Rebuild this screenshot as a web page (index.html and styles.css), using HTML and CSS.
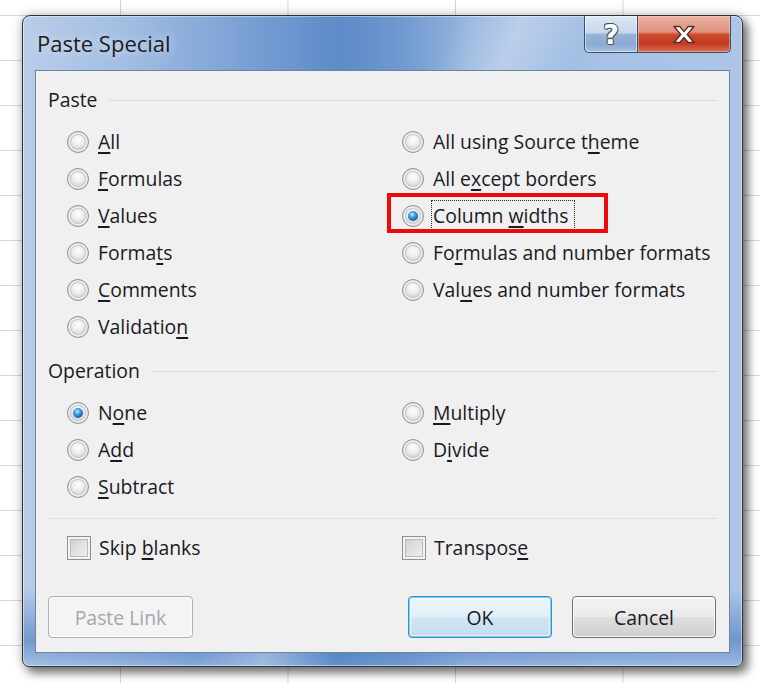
FILE: index.html
```html
<!DOCTYPE html>
<html lang="en">
<head>
<meta charset="utf-8">
<title>Paste Special</title>
<link rel="stylesheet" href="styles.css">
</head>
<body>
<div class="sheet">
  <div class="dialog">
    <div class="titlebar">
      <span class="title">Paste Special</span>
      <div class="caption-buttons">
        <span class="cap-help">?</span>
        <span class="cap-close">
          <svg width="24" height="19" viewBox="0 0 24 19">
            <path d="M2 1.5h5.8L12 6.6l4.2-5.1H22l-6.8 8 6.8 8h-5.8L12 12.4l-4.2 5.1H2l6.8-8z" fill="#fff" stroke="#5a2a22" stroke-width="1.3" stroke-linejoin="round"/>
          </svg>
        </span>
      </div>
    </div>

    <div class="client">
      <div class="group-head"><span>Paste</span><i class="rule"></i></div>
      <div class="options paste-options">
        <label class="option"><span class="radio"></span><span><u>A</u>ll</span></label>
        <label class="option"><span class="radio"></span><span><u>F</u>ormulas</span></label>
        <label class="option"><span class="radio"></span><span><u>V</u>alues</span></label>
        <label class="option"><span class="radio"></span><span>Forma<u>t</u>s</span></label>
        <label class="option"><span class="radio"></span><span><u>C</u>omments</span></label>
        <label class="option"><span class="radio"></span><span>Validatio<u>n</u></span></label>
        <label class="option"><span class="radio"></span><span>All using Source t<u>h</u>eme</span></label>
        <label class="option"><span class="radio"></span><span>All e<u>x</u>cept borders</span></label>
        <label class="option"><span class="callout"></span><span class="radio checked"></span><span class="focus">Column <u>w</u>idths</span></label>
        <label class="option"><span class="radio"></span><span>Fo<u>r</u>mulas and number formats</span></label>
        <label class="option"><span class="radio"></span><span>Val<u>u</u>es and number formats</span></label>
      </div>

      <div class="group-head op-head"><span>Operation</span><i class="rule"></i></div>
      <div class="options op-options">
        <label class="option"><span class="radio checked"></span><span>N<u>o</u>ne</span></label>
        <label class="option"><span class="radio"></span><span>A<u>d</u>d</span></label>
        <label class="option"><span class="radio"></span><span><u>S</u>ubtract</span></label>
        <label class="option"><span class="radio"></span><span><u>M</u>ultiply</span></label>
        <label class="option"><span class="radio"></span><span>D<u>i</u>vide</span></label>
      </div>

      <div class="separator"></div>

      <div class="checks">
        <label class="option check-option"><span class="checkbox"></span><span>Skip <u>b</u>lanks</span></label>
        <label class="option check-option"><span class="checkbox"></span><span>Transpos<u>e</u></span></label>
      </div>

      <div class="buttons">
        <span class="btn btn-disabled">Paste Link</span>
        <span class="btn btn-default">OK</span>
        <span class="btn">Cancel</span>
      </div>
    </div>
  </div>
</div>
</body>
</html>
```

FILE: styles.css
```css
html, body {
  margin: 0;
  padding: 0;
}

/* worksheet behind the dialog */
.sheet {
  width: 760px;
  height: 683px;
  box-sizing: border-box;
  padding: 15px 0 0 22px;
  overflow: hidden;
  background-color: #ffffff;
  background-image:
    linear-gradient(90deg, #d3d8e0 1px, transparent 1px),
    linear-gradient(#d3d8e0 1px, transparent 1px);
  background-size: 167.5px 45px, 167.5px 45px;
  background-position: 120px 0, 0 15px;
  font-family: "Open Sans", "Noto Sans", sans-serif;
}

/* Aero window frame */
.dialog {
  width: 721px;
  height: 652px;
  box-sizing: border-box;
  border: 1px solid #2f343b;
  border-radius: 8px 8px 7px 7px;
  padding: 0 12px 13px;
  display: flex;
  flex-direction: column;
  background:
    linear-gradient(112deg, rgba(255,255,255,0) 44%, rgba(255,255,255,0.32) 51%, rgba(255,255,255,0) 58%),
    linear-gradient(to bottom, rgba(60,110,185,0) 88%, rgba(60,110,185,0.55) 96%, rgba(120,160,215,0.3) 100%),
    linear-gradient(90deg, #b9cde9 0%, #a3bee3 14%, #7ca2d5 30%, #5c8bc8 44%, #6e98cf 52%, #95b4de 62%, #a6c1e5 80%, #adc6e7 100%);
  box-shadow:
    inset 0 0 0 1px rgba(255,255,255,0.45),
    5px 6px 10px rgba(0,0,0,0.5),
    0 0 12px rgba(0,0,0,0.25);
}

.titlebar {
  height: 54px;
  flex: none;
  display: flex;
  align-items: flex-start;
  padding-left: 2px;
}

.title {
  line-height: 54px;
  font-size: 22px;
  color: #1c1c1c;
  text-shadow: 0 0 8px rgba(235,242,250,0.9);
}

.caption-buttons {
  margin-left: auto;
  margin-right: -1px;
  display: flex;
  height: 37px;
}

.cap-help,
.cap-close {
  box-sizing: border-box;
  height: 37px;
  display: flex;
  align-items: center;
  justify-content: center;
  border: 1px solid #3f4d62;
  border-top: none;
}

.cap-help {
  width: 54px;
  border-radius: 0 0 0 5px;
  background: linear-gradient(#dde8f5 0%, #c6d7ed 46%, #97b2d6 52%, #8caad3 80%, #a8c2e4 100%);
  box-shadow: inset 0 0 0 1px rgba(255,255,255,0.5);
  font-family: "DejaVu Sans", sans-serif;
  font-weight: bold;
  font-size: 27px;
  line-height: 1;
  color: #ffffff;
  text-shadow: 1px 0 0 #4b5566, -1px 0 0 #4b5566, 0 1px 0 #4b5566, 0 -1px 0 #4b5566, 1px 1px 0 #4b5566, -1px -1px 0 #4b5566;
}

.cap-close {
  width: 93px;
  border-left: none;
  border-radius: 0 0 5px 0;
  background: linear-gradient(#ebb3a5 0%, #df917e 44%, #cb4a2f 52%, #c23a20 76%, #d86f55 100%);
  box-shadow: inset 0 0 0 1px rgba(255,220,210,0.45);
}

/* dialog body */
.client {
  flex: 1;
  box-sizing: border-box;
  border: 1px solid #71849e;
  background: #f0f0f0;
  padding: 17px 12px 14px;
  display: flex;
  flex-direction: column;
  font-size: 19.4px;
  color: #1a1a24;
}

.group-head {
  height: 24px;
  display: flex;
  align-items: center;
  gap: 12px;
  line-height: 24px;
}

.group-head .rule {
  flex: 1;
  height: 1px;
  background: #d6dfe6;
}

.op-head {
  margin-top: 14px;
}

.options {
  margin-top: 11px;
  padding-left: 19px;
  display: grid;
  grid-template-columns: 335px auto;
  grid-auto-flow: column;
}

.paste-options {
  grid-template-rows: repeat(6, 37px);
}

.op-options {
  grid-template-rows: repeat(3, 37px);
}

.option {
  position: relative;
  display: flex;
  align-items: center;
  gap: 9px;
  white-space: nowrap;
}

.option u {
  text-decoration-thickness: 1.6px;
  text-underline-offset: 3px;
}

/* radio buttons */
.radio {
  position: relative;
  flex: none;
  width: 22px;
  height: 22px;
  box-sizing: border-box;
  border-radius: 50%;
  border: 1px solid #8f9296;
  background: radial-gradient(circle at 50% 38%, #fdfdfd 0%, #eceef0 35%, #d3d5d8 62%, #e4e5e7 100%);
  box-shadow: inset 0 0 0 2px #ececec, inset 0 0 0 3px #c6c8cb;
}

.radio.checked::after {
  content: "";
  position: absolute;
  left: 5px;
  top: 5px;
  width: 10px;
  height: 10px;
  border-radius: 50%;
  background: radial-gradient(circle at 42% 35%, #bfe9ff 0%, #3f9be0 35%, #1a5fa8 70%, #0f3f7c 100%);
}

.focus {
  line-height: 28px;
  padding-right: 5px;
  outline: 1px dotted #2a2a2a;
  outline-offset: 1px;
}

/* red highlight drawn over the option */
.callout {
  position: absolute;
  left: -15px;
  top: -4px;
  width: 221px;
  height: 40px;
  box-sizing: border-box;
  border: 4px solid #ec0b0b;
  pointer-events: none;
}

.separator {
  margin-top: 13px;
  height: 1px;
  flex: none;
  background: #d6dfe6;
}

.checks {
  margin-top: 10px;
  height: 37px;
  padding-left: 19px;
  display: grid;
  grid-template-columns: 335px auto;
}

.check-option {
  gap: 8px;
}

.checkbox {
  flex: none;
  width: 24px;
  height: 24px;
  box-sizing: border-box;
  border: 1px solid #8e9093;
  background: linear-gradient(135deg, #c9cacc 0%, #dedfe1 45%, #f4f4f5 100%);
  box-shadow: inset 0 0 0 2px #f3f3f3, inset 0 0 0 3px #b9bbbe;
}

/* push buttons */
.buttons {
  margin-top: 30px;
  height: 42px;
  display: flex;
  gap: 20px;
  padding-right: 1px;
}

.btn {
  width: 144px;
  height: 42px;
  box-sizing: border-box;
  display: flex;
  align-items: center;
  justify-content: center;
  border: 1px solid #707070;
  border-radius: 4px;
  background: linear-gradient(#f3f3f3 0%, #ebebeb 48%, #dedede 52%, #cfcfcf 100%);
  box-shadow: inset 0 0 0 1px rgba(255,255,255,0.8);
  color: #1a1a24;
}

.btn-disabled {
  width: 145px;
  margin-right: auto;
  border-color: #adb2b5;
  background: #f4f4f4;
  box-shadow: inset 0 0 0 1px #fbfbfb;
  color: #a2a8b0;
}

.btn-default {
  border-color: #3c8fd0;
  background: linear-gradient(#eef6fb 0%, #e3eff8 48%, #d2e6f4 52%, #c3dcee 100%);
  box-shadow: inset 0 0 0 1px #6fd0f8, inset 0 0 0 2px rgba(255,255,255,0.6);
}
```
